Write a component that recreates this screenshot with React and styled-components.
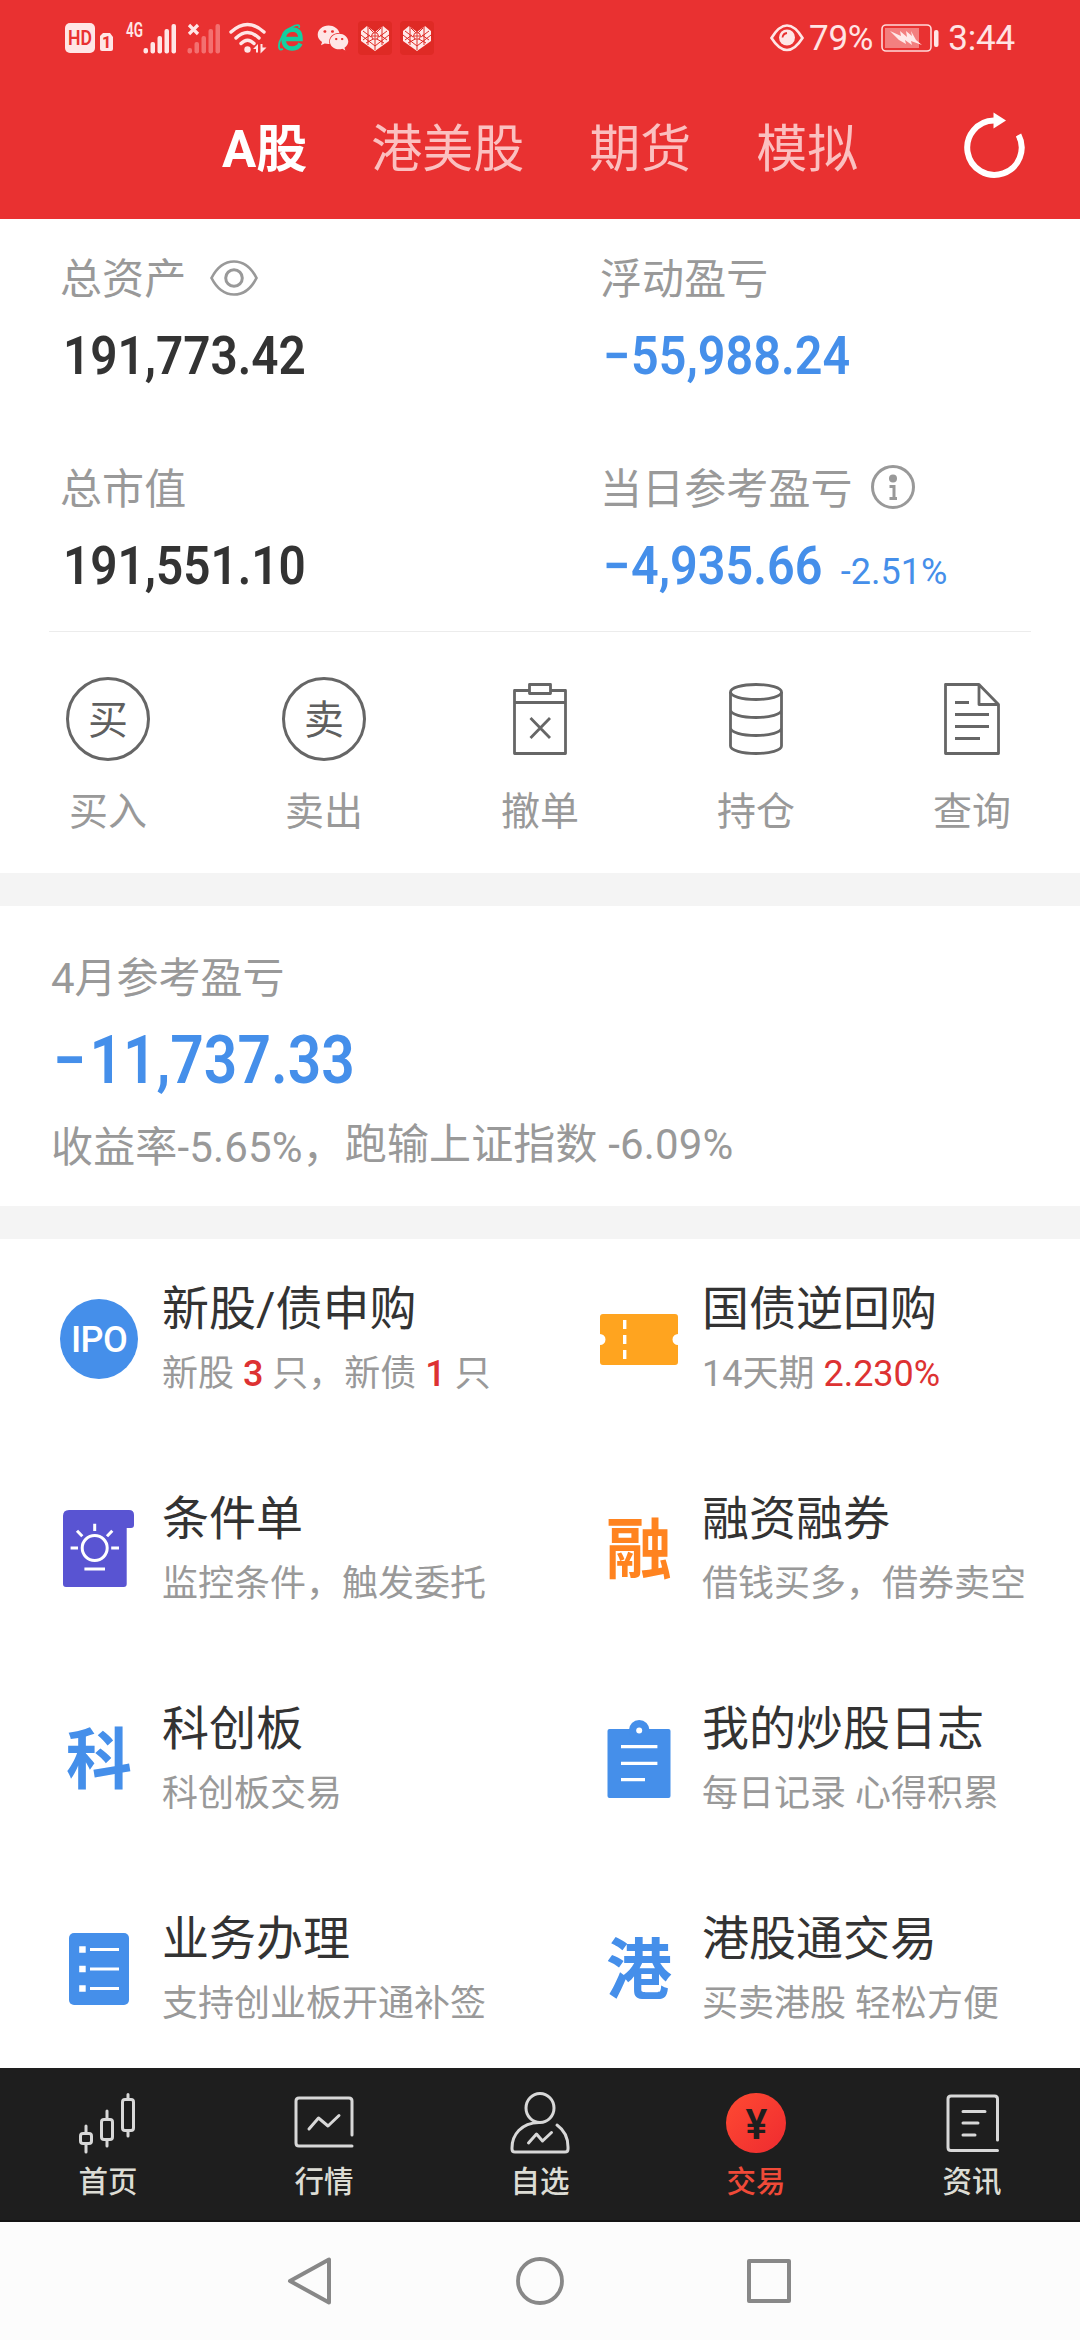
import React from "react";
import styled, { createGlobalStyle } from "styled-components";
import { FaWeixin } from "react-icons/fa";

const BLUE = "#458fea";
const RED = "#e93131";

const GlobalStyle = createGlobalStyle`
  *, *::before, *::after { box-sizing: border-box; }
  body {
    margin: 0;
    background: #fff;
    font-family: Roboto, "Noto Sans CJK SC", sans-serif;
    color: #333;
  }
  svg { display: block; flex: none; overflow: visible; }
`;

const Screen = styled.div`
  width: 1080px;
  height: 2340px;
  display: flex;
  flex-direction: column;
  overflow: hidden;
  background: #fff;
  white-space: nowrap;
`;

const Header = styled.header`
  height: 219px;
  background: ${RED};
  color: #fff;
`;

const StatusBar = styled.div`
  height: 76px;
  display: flex;
  align-items: center;
  justify-content: space-between;
  padding: 0 65px 0 65px;
`;

const StatusGroup = styled.div`
  display: flex;
  align-items: center;
`;

const StatusText = styled.span`
  font-size: 35px;
  line-height: 40px;
  padding-top: 2px;
  color: #ffe4e4;
  letter-spacing: -0.2px;
  margin-left: ${(p) => p.$gap}px;
`;

const Spaced = styled.span`
  display: flex;
  margin-left: ${(p) => p.$gap}px;
`;

const TabBar = styled.nav`
  height: 143px;
  display: flex;
  align-items: flex-start;
  padding-left: 222px;
`;

const Tab = styled.span`
  font-size: 51px;
  line-height: 60px;
  margin-top: 44px;
  margin-right: ${(p) => p.$gap}px;
  font-weight: ${(p) => (p.$active ? 700 : 400)};
  color: ${(p) => (p.$active ? "#fff" : "#fbc0c0")};
`;

const RefreshButton = styled.div`
  margin: 34px 0 0 auto;
  padding-right: 55px;
`;

const Summary = styled.section`
  display: grid;
  grid-template-columns: 540px 540px;
  grid-template-rows: 210px 202px;
`;

const Metric = styled.div`
  padding: 33px 0 0 60px;
`;

const MetricLabel = styled.div`
  display: flex;
  align-items: center;
  height: 56px;
  font-size: 42px;
  line-height: 56px;
  color: #999;
  letter-spacing: 0.1px;
`;

const LabelIcon = styled.span`
  display: flex;
  margin-left: ${(p) => p.$gap}px;
  padding-bottom: ${(p) => p.$lift}px;
`;

const MetricValue = styled.div`
  display: flex;
  align-items: baseline;
  margin-top: 18px;
  padding-left: 3px;
  font-size: 53px;
  line-height: 60px;
  font-weight: 600;
  color: ${(p) => (p.$loss ? BLUE : "#333")};
`;

const Digits = styled.span`
  display: inline-block;
  transform: scaleX(${(p) => p.$stretch});
  transform-origin: left center;
`;

const Minus = styled.span`
  letter-spacing: ${(p) => p.$gap}px;
`;

const Percent = styled.span`
  margin-left: -2px;
  font-size: 36px;
  font-weight: 400;
`;

const Divider = styled.hr`
  width: 982px;
  height: 1px;
  margin: 0 auto;
  border: 0;
  background: #ececec;
  flex: none;
`;

const Actions = styled.section`
  height: 241px;
  display: grid;
  grid-template-columns: repeat(5, 216px);
`;

const Action = styled.div`
  display: flex;
  flex-direction: column;
  align-items: center;
  padding-top: 45px;
`;

const ActionIcon = styled.div`
  height: 84px;
  display: flex;
  align-items: center;
`;

const RoundGlyph = styled.div`
  width: 84px;
  height: 84px;
  border: 3px solid #666;
  border-radius: 50%;
  color: #5f5f5f;
  font-size: 40px;
  line-height: 81px;
  text-align: center;
`;

const ActionLabel = styled.div`
  margin-top: 25px;
  font-size: 39px;
  line-height: 52px;
  color: #999;
`;

const Band = styled.div`
  height: 33px;
  background: #f4f4f4;
  flex: none;
`;

const Monthly = styled.section`
  height: 300px;
  padding: 43px 0 0 51px;
  color: #999;
  font-size: 42px;
`;

const MonthlyTitle = styled.div`
  line-height: 60px;
`;

const MonthlyValue = styled.div`
  margin-top: 12px;
  padding-left: 2px;
  font-size: 66px;
  line-height: 80px;
  font-weight: 600;
  color: ${BLUE};
`;

const MonthlyNote = styled.div`
  display: flex;
  align-items: flex-start;
  margin-top: 14px;
  line-height: 60px;
  letter-spacing: 0.15px;
`;

const NoteRate = styled.span`
  padding-top: 3px;
`;

const Services = styled.section`
  height: 829px;
  display: grid;
  grid-template-columns: 540px 540px;
  grid-auto-rows: 200px;
  row-gap: 10px;
  overflow: hidden;
`;

const Service = styled.div`
  display: flex;
  align-items: center;
  padding-left: 59px;
`;

const ServiceIcon = styled.div`
  width: 80px;
  height: 80px;
  margin-right: 23px;
  display: flex;
  align-items: center;
  justify-content: center;
`;

const ServiceText = styled.div`
  padding-top: 5px;
`;

const ServiceTitle = styled.div`
  font-size: 47px;
  line-height: 64px;
  color: #333;
`;

const ServiceNote = styled.div`
  font-size: 36px;
  line-height: 66px;
  color: #999;
`;

const Hot = styled.b`
  font-weight: ${(p) => (p.$light ? 400 : 500)};
  color: #dd3232;
`;

const IpoBadge = styled.div`
  width: 78px;
  height: 80px;
  border-radius: 50%;
  background: ${BLUE};
  color: #fff;
  font-size: 36px;
  font-weight: 500;
  line-height: 82px;
  letter-spacing: -0.6px;
  text-align: center;
`;

const GlyphMark = styled.div`
  font-size: 66px;
  line-height: 80px;
  padding-top: 4px;
  font-weight: 700;
  color: ${(p) => p.$color};
`;

const BottomNav = styled.nav`
  height: 154px;
  display: grid;
  grid-template-columns: repeat(5, 216px);
  background: #1e1e1e;
  border-bottom: 2px solid #141414;
`;

const NavItem = styled.div`
  display: flex;
  flex-direction: column;
  align-items: center;
  padding-top: 24px;
  font-size: 29.5px;
  font-weight: 500;
  color: ${(p) => (p.$active ? "#f04a38" : "#dcdcd4")};
`;

const NavIcon = styled.div`
  height: 62px;
  display: flex;
  align-items: center;
`;

const NavLabel = styled.span`
  margin-top: 8px;
  line-height: 40px;
`;

const YenCoin = styled.div`
  width: 60px;
  height: 60px;
  border-radius: 50%;
  background: linear-gradient(135deg, #ff4a32, #ee2b30);
  color: #1e1e1e;
  font-size: 43px;
  line-height: 62px;
  font-weight: 600;
  text-align: center;
`;

const YenSign = styled.span`
  display: inline-block;
  transform: scaleX(0.95);
`;

const SystemNav = styled.div`
  height: 118px;
  display: flex;
  align-items: center;
  justify-content: space-between;
  padding: 0 286px 0 286px;
  background: #fcfcfc;
`;

const HdIcon = () => (
  <svg width="50" height="32" viewBox="0 0 50 32">
    <rect x="0" y="1" width="30" height="30" rx="5" fill="#ffe6e6" />
    <text x="3" y="23" fontSize="20" fontWeight="600" fill={RED} textLength="24" lengthAdjust="spacingAndGlyphs">HD</text>
    <path d="M38 11h7l3 4v12q0 2-2 2h-9q-2 0-2-2V14z" fill="#ffe6e6" />
    <text x="37" y="26" fontSize="16" fontWeight="800" fill={RED}>1</text>
  </svg>
);

const bars = [
  [0, 26], [7, 20], [14, 14], [21, 7], [28, 2],
];

const SignalIcon = () => (
  <svg width="52" height="32" viewBox="0 0 52 32">
    <text x="0" y="15" fontSize="20" fontWeight="600" fill="#ffe6e6" textLength="17" lengthAdjust="spacingAndGlyphs">4G</text>
    {bars.map(([x, y]) => (
      <rect key={x} x={17.5 + x} y={y} width="4.5" height={31.5 - y} rx="2" fill="#ffe6e6" />
    ))}
  </svg>
);

const NoSignalIcon = () => (
  <svg width="34" height="32" viewBox="0 0 34 32">
    {bars.map(([x, y]) => (
      <rect key={x} x={x + 0.5} y={y} width="4.5" height={31.5 - y} rx="2" fill="#f37070" />
    ))}
    <path d="M2 3l9 9M11 3l-9 9" stroke={RED} strokeWidth="7" />
    <path d="M2 3l9 9M11 3l-9 9" stroke="#ffe6e6" strokeWidth="3.2" />
  </svg>
);

const WifiIcon = () => (
  <svg width="38" height="32" viewBox="0 0 38 32" fill="none" stroke="#ffe6e6" strokeLinecap="round">
    <path d="M2 10Q18.500 -5 35 10M7 16Q18.500 5 30 16M12 21.500Q18.500 15 25 21.500" strokeWidth="3.400" />
    <circle cx="18.500" cy="27.500" r="3.200" fill="#ffe6e6" stroke="none" />
    <path d="M24 27l5-5v8.500h-2V27zM31.500 22h2v3.500h4l-6 6z" fill="#ffe6e6" stroke="none" />
  </svg>
);

const BrowserIcon = () => (
  <svg width="28" height="30" viewBox="0 0 28 30" fill="none" stroke="#14d0a0">
    <path d="M7 16H23.500Q23.500 6.500 15.500 6.500Q6.500 7.500 6.500 16.500Q7 25.500 15.500 25.500Q21 25.500 23.500 20.500" strokeWidth="4.500" />
    <path d="M22 5Q23.500 1 18 2.500Q7 7 2.500 19Q0.500 28.500 6 26" strokeWidth="1.800" />
  </svg>
);

const HeartIcon = () => (
  <svg width="35" height="35" viewBox="0 0 35 35" fill="none">
    <rect width="34" height="34" rx="4" fill="#df2a25" />
    <path d="M3 10l6-5 8 6 8-6 6 5v10L17 30 3 20z" fill="#ffe9e9" />
    <path d="M3 14l14 11 14-11M10 5v19M24 5v19M17 10v3M17 19v10M5 10l8 6M29 10l-8 6M5 19l7-5M29 19l-7-5M11 7l6 6 6-6M8 22l9-5 9 5" stroke="#df2a25" strokeWidth="1" />
    <circle cx="17" cy="15" r="3.400" fill="#ffe9e9" stroke="#df2a25" />
    <path d="M13.500 15h7M17 12v6" stroke="#df2a25" strokeWidth="0.900" />
  </svg>
);

const EyeProtectIcon = () => (
  <svg width="34" height="28" viewBox="0 0 34 28" fill="none">
    <path d="M1.500 14Q9 1.500 17 1.500T32.500 14Q25 26 17 26T1.500 14Z" stroke="#ffe6e6" strokeWidth="2.600" />
    <circle cx="17" cy="13.500" r="8" fill="#ffe6e6" />
    <path d="M12.500 13.500q0.500-4 4.500-4.500" stroke={RED} strokeWidth="1.800" />
  </svg>
);

const BatteryIcon = () => (
  <svg width="58" height="28" viewBox="0 0 58 28">
    <rect x="1" y="1" width="49" height="26" rx="4" fill="none" stroke="#ffd9d9" strokeWidth="1.600" />
    <rect x="4" y="4" width="34" height="20" fill="#f37f7f" />
    <path d="M9 7l11 5-1-5 7 6-1-6 6 5-1-5 5 9 6 5-11-4 1 4-7-5 1 4-7-4z" fill="#ffe9e9" />
    <rect x="53" y="6" width="4.500" height="17" rx="2" fill="#ffe6e6" />
  </svg>
);

const RefreshIcon = () => (
  <svg width="64" height="70" viewBox="0 0 64 70">
    <path d="M57.500 25A27.200 27.200 0 1 1 33 10.500" fill="none" stroke="#fff" strokeWidth="6" />
    <path d="M32.500 2.500L45 10.500 32.500 18.500z" fill="#fff" />
  </svg>
);

const EyeIcon = () => (
  <svg width="48" height="36" viewBox="0 0 48 36" fill="none" stroke="#999" strokeWidth="2.700">
    <path d="M1.500 18Q10 1.500 24 1.500T46.500 18Q38 34.500 24 34.500T1.500 18Z" />
    <circle cx="24" cy="18" r="8.300" strokeWidth="3" />
  </svg>
);

const InfoIcon = () => (
  <svg width="46" height="46" viewBox="0 0 46 46" fill="none" stroke="#999" strokeWidth="3">
    <circle cx="23" cy="23" r="20.500" />
    <circle cx="23" cy="14.500" r="4" fill="#999" stroke="none" />
    <path d="M19.500 22.500h4.500v12M19.500 34.500h7.500" />
  </svg>
);

const Line = ({ w, h, children }) => (
  <svg width={w} height={h} viewBox={`0 0 ${w} ${h}`} fill="none" stroke="#666" strokeWidth="2.800" strokeLinejoin="round">
    {children}
  </svg>
);

const CancelIcon = () => (
  <Line w={56} h={74}>
    <path d="M17.500 8.500H2.500V71.500H53.500V8.500H38.500M2.500 20.500H53.500" />
    <rect x="17.500" y="2.500" width="21" height="9" />
    <path d="M18.500 36L38 56M38 36L18.500 56" />
  </Line>
);

const HoldingsIcon = () => (
  <Line w={56} h={74}>
    <ellipse cx="28" cy="10" rx="25.500" ry="7.500" />
    <path d="M2.500 10V64A25.500 7.500 0 0 0 53.500 64V10M2.500 28A25.500 7.500 0 0 0 53.500 28M2.500 46A25.500 7.500 0 0 0 53.500 46" />
  </Line>
);

const QueryIcon = () => (
  <Line w={58} h={74}>
    <path d="M36 2.500H2.500V71.500H55.500V22.500ZM36 2.500V22.500H55.500M12 20.500H26M12 32.500H46M12 44.500H46M12 56.500H37" />
  </Line>
);

const TicketIcon = () => (
  <svg width="80" height="80" viewBox="0 0 80 80">
    <path d="M4 15H76Q79 15 79 18V35A5.500 5.500 0 0 0 79 46V63Q79 66 76 66H4Q1 66 1 63V46A5.500 5.500 0 0 0 1 35V18Q1 15 4 15Z" fill="#ffa41f" />
    <path d="M25.700 21v9M25.700 36v9M25.700 51v9" stroke="#fff" strokeWidth="3.400" />
  </svg>
);

const ConditionIcon = () => (
  <svg width="80" height="80" viewBox="0 0 80 80">
    <path d="M10 1H70Q75 1 75 6V16Q75 19 72 19H67.700V75Q67.700 78 64.700 78H7Q4 78 4 75V7Q4 1 10 1Z" fill="#5954d2" />
    <g fill="none" stroke="#fff" strokeWidth="3">
      <circle cx="35.700" cy="39" r="12.500" />
      <path d="M35.700 14.700V22M11.600 39H19M52.200 39H60M18 21.700L23.300 27.300M53.300 21.700L48 27.300M25.400 60H46" />
    </g>
  </svg>
);

const JournalIcon = () => (
  <svg width="80" height="80" viewBox="0 0 80 80">
    <rect x="8.500" y="10" width="63" height="69" rx="2" fill={BLUE} />
    <circle cx="40.200" cy="11.300" r="10.300" fill={BLUE} />
    <circle cx="40.200" cy="11.500" r="3" fill="#fff" />
    <path d="M22 27.700H58.400M22 44.300H58.400M22 60.700H46" stroke="#fff" strokeWidth="3.300" />
  </svg>
);

const BusinessIcon = () => (
  <svg width="80" height="80" viewBox="0 0 80 80">
    <rect x="10" y="4" width="60" height="72" rx="5" fill={BLUE} />
    <path d="M20.200 20.500h6.500M20.200 40h6.500M20.200 59.500h6.500" stroke="#fff" strokeWidth="6.500" />
    <path d="M31 20.500H60M31 40H60M31 59.500H60" stroke="#fff" strokeWidth="3" />
  </svg>
);

const NavGlyph = ({ children }) => (
  <svg width="62" height="62" viewBox="0 0 62 62" fill="none" stroke="#d8d8d8" strokeWidth="3" strokeLinecap="round" strokeLinejoin="round">
    {children}
  </svg>
);

const HomeIcon = () => (
  <NavGlyph>
    <rect x="3.500" y="41.500" width="11" height="10" rx="2.500" />
    <rect x="24.500" y="27.500" width="11" height="20" rx="2.500" />
    <rect x="45.500" y="7.500" width="11" height="31" rx="2.500" />
    <path d="M9 34v7M9 52v8M30 19v8M30 48v6M51 2.500v4M51 39v5" />
  </NavGlyph>
);

const MarketIcon = () => (
  <NavGlyph>
    <path d="M59 43V9Q59 6 56 6H6Q3 6 3 9V51Q3 54 6 54H59M16 37L25.500 26 35 34 46 23.500" />
  </NavGlyph>
);

const PersonIcon = () => (
  <NavGlyph>
    <ellipse cx="31" cy="16" rx="14" ry="14.500" />
    <path d="M30 30.500C12 31 3 43 3 56V57Q3 60 6 60H56Q59 60 59 57V55C59 46 55 38 48 33M19.500 51L27.500 42 33.500 49 42.500 40.500" />
  </NavGlyph>
);

const NewsIcon = () => (
  <NavGlyph>
    <path d="M56.500 48V7Q56.500 4 53.500 4H10Q7 4 7 7V55.500Q7 58.500 10 58.500H56.500M22 19.500H44M22 31H37M22 43H34" />
  </NavGlyph>
);

const SystemGlyph = ({ children }) => (
  <svg width="50" height="50" viewBox="0 0 50 50" fill="none" stroke="#888" strokeWidth="4" strokeLinejoin="round">
    {children}
  </svg>
);

const services = [
  { icon: <IpoBadge>IPO</IpoBadge>, title: "新股/债申购", note: <>新股 <Hot>3</Hot> 只，新债 <Hot>1</Hot> 只</> },
  { icon: <TicketIcon />, title: "国债逆回购", note: <>14天期 <Hot $light>2.230%</Hot></> },
  { icon: <ConditionIcon />, title: "条件单", note: "监控条件，触发委托" },
  { icon: <GlyphMark $color="#ff831f">融</GlyphMark>, title: "融资融券", note: "借钱买多，借券卖空" },
  { icon: <GlyphMark $color={BLUE}>科</GlyphMark>, title: "科创板", note: "科创板交易" },
  { icon: <JournalIcon />, title: "我的炒股日志", note: "每日记录 心得积累" },
  { icon: <BusinessIcon />, title: "业务办理", note: "支持创业板开通补签" },
  { icon: <GlyphMark $color={BLUE}>港</GlyphMark>, title: "港股通交易", note: "买卖港股 轻松方便" },
];

const actions = [
  { icon: <RoundGlyph>买</RoundGlyph>, label: "买入" },
  { icon: <RoundGlyph>卖</RoundGlyph>, label: "卖出" },
  { icon: <CancelIcon />, label: "撤单" },
  { icon: <HoldingsIcon />, label: "持仓" },
  { icon: <QueryIcon />, label: "查询" },
];

const navItems = [
  { icon: <HomeIcon />, label: "首页" },
  { icon: <MarketIcon />, label: "行情" },
  { icon: <PersonIcon />, label: "自选" },
  { icon: <YenCoin><YenSign>¥</YenSign></YenCoin>, label: "交易", active: true },
  { icon: <NewsIcon />, label: "资讯" },
];

export default function App() {
  return (
    <Screen>
      <GlobalStyle />
      <Header>
        <StatusBar>
          <StatusGroup>
            <HdIcon />
            <Spaced $gap={11}><SignalIcon /></Spaced>
            <Spaced $gap={9}><NoSignalIcon /></Spaced>
            <Spaced $gap={8}><WifiIcon /></Spaced>
            <Spaced $gap={10}><BrowserIcon /></Spaced>
            <Spaced $gap={12}><FaWeixin size={32} color="#ffe6e6" /></Spaced>
            <Spaced $gap={9}><HeartIcon /></Spaced>
            <Spaced $gap={7}><HeartIcon /></Spaced>
          </StatusGroup>
          <StatusGroup>
            <EyeProtectIcon />
            <StatusText $gap={5}>79%</StatusText>
            <Spaced $gap={8}><BatteryIcon /></Spaced>
            <StatusText $gap={9}>3:44</StatusText>
          </StatusGroup>
        </StatusBar>
        <TabBar>
          <Tab $active $gap={64}>A股</Tab>
          <Tab $gap={65}>港美股</Tab>
          <Tab $gap={65}>期货</Tab>
          <Tab $gap={0}>模拟</Tab>
          <RefreshButton><RefreshIcon /></RefreshButton>
        </TabBar>
      </Header>

      <Summary>
        <Metric>
          <MetricLabel>总资产<LabelIcon $gap={24} $lift={4}><EyeIcon /></LabelIcon></MetricLabel>
          <MetricValue><Digits $stretch={0.9}>191,773.42</Digits></MetricValue>
        </Metric>
        <Metric>
          <MetricLabel>浮动盈亏</MetricLabel>
          <MetricValue $loss><Digits $stretch={0.915}><Minus $gap={1}>−</Minus>55,988.24</Digits></MetricValue>
        </Metric>
        <Metric>
          <MetricLabel>总市值</MetricLabel>
          <MetricValue><Digits $stretch={0.9}>191,551.10</Digits></MetricValue>
        </Metric>
        <Metric>
          <MetricLabel>当日参考盈亏<LabelIcon $gap={17} $lift={7}><InfoIcon /></LabelIcon></MetricLabel>
          <MetricValue $loss><Digits $stretch={0.915}><Minus $gap={1}>−</Minus>4,935.66</Digits><Percent>-2.51%</Percent></MetricValue>
        </Metric>
      </Summary>
      <Divider />
      <Actions>
        {actions.map((a) => (
          <Action key={a.label}>
            <ActionIcon>{a.icon}</ActionIcon>
            <ActionLabel>{a.label}</ActionLabel>
          </Action>
        ))}
      </Actions>
      <Band />
      <Monthly>
        <MonthlyTitle>4月参考盈亏</MonthlyTitle>
        <MonthlyValue><Digits $stretch={0.89}><Minus $gap={4}>−</Minus>11,737.33</Digits></MonthlyValue>
        <MonthlyNote>
          <NoteRate>收益率-5.65%，</NoteRate>
          <span>跑输上证指数 -6.09%</span>
        </MonthlyNote>
      </Monthly>
      <Band />
      <Services>
        {services.map((s) => (
          <Service key={s.title}>
            <ServiceIcon>{s.icon}</ServiceIcon>
            <ServiceText>
              <ServiceTitle>{s.title}</ServiceTitle>
              <ServiceNote>{s.note}</ServiceNote>
            </ServiceText>
          </Service>
        ))}
      </Services>
      <BottomNav>
        {navItems.map((n) => (
          <NavItem key={n.label} $active={n.active}>
            <NavIcon>{n.icon}</NavIcon>
            <NavLabel>{n.label}</NavLabel>
          </NavItem>
        ))}
      </BottomNav>
      <SystemNav>
        <SystemGlyph><path d="M43 3.500V46.500L4 25Z" /></SystemGlyph>
        <SystemGlyph><circle cx="25" cy="25" r="22" strokeWidth="3.800" /></SystemGlyph>
        <SystemGlyph><rect x="5" y="5" width="40" height="40" /></SystemGlyph>
      </SystemNav>
    </Screen>
  );
}
